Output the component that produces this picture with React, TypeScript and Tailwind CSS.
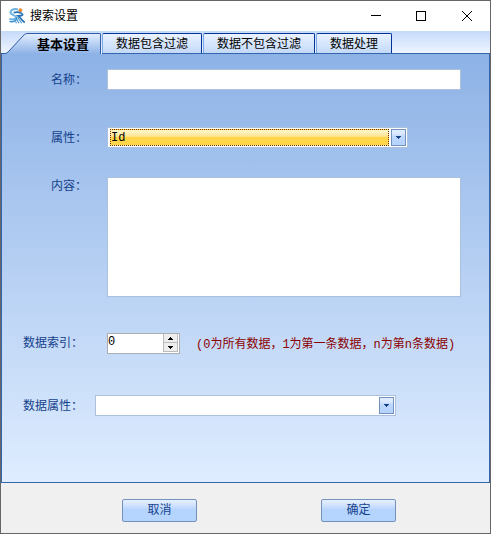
import { useState, type ReactNode } from "react";

const tabs = ["数据包含过滤", "数据不包含过滤", "数据处理"];

const AppLogo = () => (
  <svg width="16" height="16" viewBox="0 0 16 16" fill="none" aria-hidden="true">
    <circle cx="11.4" cy="2.2" r="1.9" fill="#f08a2c" />
    <path d="M9 1.4C4.6 0.4 1 2.2 1.6 4.8C2.2 7.2 6.2 7 7 9C7.4 10.8 4.6 11.8 0.4 11" stroke="#6db4e2" strokeWidth="2" />
    <path d="M0.6 13.6C4.6 14.2 7.4 12.4 8 9.4" stroke="#3b90cd" strokeWidth="1.5" />
    <path d="M4.6 4.8C8 3.6 12.4 4.4 13.6 6.4C13.8 7.8 11 7.4 9 7.8C11.6 9.2 12.6 12.8 15.8 14.4" stroke="#2470b3" strokeWidth="1.7" />
    <path d="M8.4 9L12.8 15.2M7.8 11.4L10 15.2M6.6 13.4L7.4 15.2" stroke="#3d93d2" strokeWidth="1.1" />
  </svg>
);

const Arrow = () => (
  <span
    aria-hidden="true"
    className="pointer-events-none absolute right-px top-px bottom-px flex w-[15px] items-center justify-center border border-[#7393bd] bg-linear-to-b from-[#deebff] from-20% via-[#bdd7ff] via-45% to-[#b5d3ff]"
  >
    <svg width="5" height="3" viewBox="0 0 5 3" shapeRendering="crispEdges">
      <path d="M0 0H5V1H4V2H3V3H2V2H1V1H0Z" fill="#15428b" />
    </svg>
  </span>
);

const ActionButton = ({ children }: { children: ReactNode }) => (
  <button
    type="button"
    className="flex h-[23px] w-[75px] items-center justify-center rounded-[2px] border border-[#7393bd] bg-linear-to-b from-[#e3eeff] from-5% via-[#c6dcff] via-35% to-[#b5d5ff] to-45% pt-px text-[#15428b]"
  >
    {children}
  </button>
);

const App = () => {
  const [index, setIndex] = useState(0);

  return (
    <div className="flex min-h-screen flex-col border border-[#666666] bg-[#f0f0f0] font-['Liberation_Mono','Noto_Sans_CJK_SC',monospace] text-[12px] leading-4">
      <header className="flex h-[30px] items-center bg-white pl-[8px] text-black">
        <AppLogo />
        <h1 className="ml-[5px] flex-1 pt-[2px]">搜索设置</h1>
        <button type="button" aria-label="最小化" className="flex h-full w-[45px] items-center justify-center">
          <svg width="10" height="10" shapeRendering="crispEdges">
            <path d="M0 4.5H10" stroke="black" />
          </svg>
        </button>
        <button type="button" aria-label="最大化" className="flex h-full w-[45px] items-center justify-center">
          <svg width="10" height="10" fill="none" shapeRendering="crispEdges">
            <rect x="0.5" y="0.5" width="9" height="9" stroke="black" />
          </svg>
        </button>
        <button type="button" aria-label="关闭" className="flex h-full w-[47px] items-center justify-center">
          <svg width="10" height="10">
            <path d="M0 0L10 10M10 0L0 10" stroke="black" />
          </svg>
        </button>
      </header>

      <nav className="flex h-[23px] items-end bg-linear-to-b from-[#c6dafa] to-[#f0f6ff]">
        <svg width="27" height="21" fill="none" aria-hidden="true">
          <defs>
            <linearGradient id="slope" x1="0" y1="0" x2="0" y2="1">
              <stop stopColor="#e3eeff" />
              <stop offset="1" stopColor="#8db2e6" />
            </linearGradient>
          </defs>
          <path d="M4 21L7 19L22 3L27 0.5V21Z" fill="url(#slope)" />
          <path d="M0 20.5H4C5.5 20.5 6.5 19.5 8 18L22 3C24 1 25 0.5 27 0.5" stroke="#2f5da5" />
        </svg>
        <button
          type="button"
          className="mr-px h-[21px] rounded-tr-[2px] border-t border-r border-[#2f5da5] bg-linear-to-b from-[#e3eeff] to-[#8db2e6] pt-[3px] pr-[11px] pl-[9px] text-[13px] font-bold"
        >
          基本设置
        </button>
        <div className="flex h-[21px] flex-1 gap-px border-b border-[#3565ae]">
          {tabs.map((tab) => (
            <button
              key={tab}
              type="button"
              className="rounded-t-[2px] border-t border-r border-l border-t-[#00349a] border-r-[#00349a] border-l-[#7aa7e8] bg-linear-to-b from-[#eaf2ff] to-[#c3d9f8] px-[13px] pt-[3px]"
            >
              {tab}
            </button>
          ))}
        </div>
      </nav>

      <main className="flex-1 border-x border-b border-[#3565ae] bg-linear-to-b from-[#8db2e6] to-[#dfedff] pb-[66px] text-[#15428b]">
        <div className="flex items-center pt-[15px] pr-[28px] pl-[49px]">
          <label htmlFor="name" className="w-[56px] shrink-0 pt-[3px]">名称：</label>
          <input id="name" className="h-[21px] min-w-0 flex-1 border border-[#abc1de] bg-white px-[2px] text-black outline-none" />
        </div>

        <div className="mt-[37px] flex items-center pr-[28px] pl-[49px]">
          <label htmlFor="attribute" className="w-[56px] shrink-0 pt-[3px]">属性：</label>
          <div className="relative h-[21px] w-[301px] border border-[#abc1de] bg-white py-px pr-[18px] pl-[2px]">
            <select
              id="attribute"
              className="block h-full w-full appearance-none border border-dotted border-[#703000] bg-linear-to-b from-[#fff3c0] from-10% via-[#ffe694] via-42% to-[#ffd54a] to-48% pb-[3px] text-black outline-none"
            >
              <option>Id</option>
            </select>
            <Arrow />
          </div>
        </div>

        <div className="mt-[29px] flex items-start pr-[28px] pl-[49px]">
          <label htmlFor="content" className="w-[56px] shrink-0 pt-[2px]">内容：</label>
          <textarea id="content" className="h-[120px] min-w-0 flex-1 resize-none border border-[#abc1de] bg-white px-[2px] text-black outline-none" />
        </div>

        <div className="mt-[36px] flex items-center pl-[21px]">
          <label htmlFor="index" className="w-[84px] shrink-0">数据索引：</label>
          <div className="flex h-[21px] w-[73px] border border-[#abadb3] bg-white pr-px">
            <input
              id="index"
              inputMode="numeric"
              value={index}
              onChange={(e) => setIndex(Number(e.target.value) || 0)}
              className="min-w-0 flex-1 pb-[3px] text-black outline-none"
            />
            <div className="flex w-[15px] flex-col pb-px">
              <button type="button" aria-label="增加" onClick={() => setIndex(index + 1)} className="flex flex-1 items-center justify-center border border-t-0 border-[#bcbcbc] bg-[#eeeeee]">
                <svg width="5" height="3" shapeRendering="crispEdges">
                  <path d="M2 0H3V1H4V2H5V3H0V2H1V1H2Z" fill="black" />
                </svg>
              </button>
              <button type="button" aria-label="减少" onClick={() => setIndex(Math.max(0, index - 1))} className="flex flex-1 items-center justify-center border border-t-0 border-[#bcbcbc] bg-[#eeeeee]">
                <svg width="5" height="3" shapeRendering="crispEdges">
                  <path d="M0 0H5V1H4V2H3V3H2V2H1V1H0Z" fill="black" />
                </svg>
              </button>
            </div>
          </div>
          <p className="ml-[16px] pt-[3px] whitespace-nowrap text-[#8b0000]">(0为所有数据，1为第一条数据，n为第n条数据)</p>
        </div>

        <div className="mt-[41px] flex items-center pl-[21px]">
          <label htmlFor="data-attribute" className="w-[72px] shrink-0 pt-[3px]">数据属性：</label>
          <div className="relative h-[21px] w-[301px] border border-[#abc1de] bg-white">
            <select id="data-attribute" className="block h-full w-full appearance-none pl-[2px] text-black outline-none" />
            <Arrow />
          </div>
        </div>
      </main>

      <footer className="flex h-[50px] items-center justify-between pt-[4px] pr-[94px] pl-[121px]">
        <ActionButton>取消</ActionButton>
        <ActionButton>确定</ActionButton>
      </footer>
    </div>
  );
};

export default App;
